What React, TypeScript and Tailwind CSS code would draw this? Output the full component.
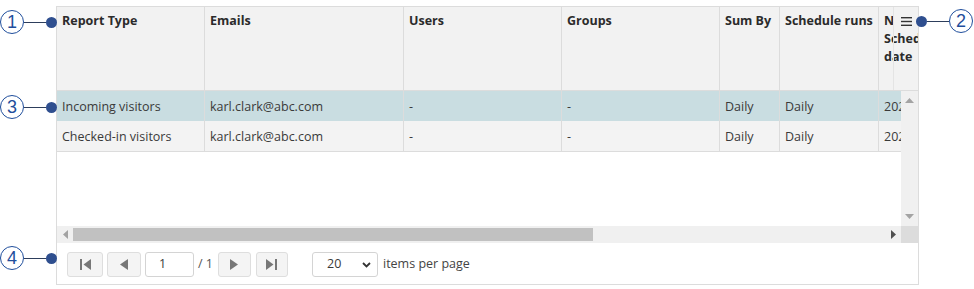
import React from 'react';

const cols = ['w-[148px]', 'w-[199px]', 'w-[158px]', 'w-[158px]', 'w-[60px]', 'w-[99px]', 'w-[60px]'];

const headers = ['Report Type', 'Emails', 'Users', 'Groups', 'Sum By', 'Schedule runs', 'Next Schedule date'];

const rows = [
    { cells: ['Incoming visitors', 'karl.clark@abc.com', '-', '-', 'Daily', 'Daily', '2024-01-01'], selected: true },
    { cells: ['Checked-in visitors', 'karl.clark@abc.com', '-', '-', 'Daily', 'Daily', '2024-01-01'], selected: false },
];

const Callout = ({ n, side }: { n: string; side: 'left' | 'right' }) => (
    <div className={`flex items-center ${side === 'right' ? 'flex-row-reverse' : ''}`}>
        <div className="w-[24px] h-[24px] rounded-full border-[1.5px] border-[#1f4e9c] flex items-center justify-center text-[18px] leading-none text-[#1f4e9c] font-['Liberation_Sans',sans-serif] bg-white">
            {n}
        </div>
        <div className="w-[22px] h-px bg-[#2d3e5c]" />
        <div className="w-[11px] h-[11px] rounded-full bg-[#2f4f8f]" />
    </div>
);

const PagerButton = ({ children, className = '' }: { children: React.ReactNode; className?: string }) => (
    <div className={`h-[25px] flex items-center justify-center rounded-[3px] border border-[#dedede] bg-[#f4f4f4] ${className}`}>
        {children}
    </div>
);

export default function App() {
    return (
        <div className="relative w-[974px] h-[289px] bg-white font-['Open_Sans',sans-serif] text-[12.5px] text-[#3a3a3a]">
            <div className="absolute left-0 top-[10px]"><Callout n="1" side="left" /></div>
            <div className="absolute left-0 top-[95px]"><Callout n="3" side="left" /></div>
            <div className="absolute left-0 top-[246px]"><Callout n="4" side="left" /></div>
            <div className="absolute right-[1px] top-[9px] z-10"><Callout n="2" side="right" /></div>

            <div className="pt-[6px] pl-[56px]">
                <div className="w-[863px] h-[279px] border border-[#dcdcdc] flex flex-col overflow-hidden">
                    {/* header */}
                    <div className="relative h-[84px] flex border-b border-[#dcdcdc] bg-[#f2f2f2] overflow-hidden shrink-0">
                        {headers.map((h, i) => (
                            <div key={h} className={`${cols[i]} shrink-0 border-r border-[#dcdcdc] pl-[5px] pr-[4px] pt-[5px] font-bold text-[#2b2b2b] leading-[18px]`}>
                                {h}
                            </div>
                        ))}
                        <div className="absolute right-0 top-0 h-full w-[25px] border-l border-[#e4e4e4]">
                            <div className="h-[26px] bg-[#f2f2f2] flex items-start justify-center pt-[10px]">
                                <svg width="11" height="9" viewBox="0 0 11 9">
                                    <rect x="0" y="0" width="11" height="1.4" fill="#333" />
                                    <rect x="0" y="3.8" width="11" height="1.4" fill="#333" />
                                    <rect x="0" y="7.6" width="11" height="1.4" fill="#333" />
                                </svg>
                            </div>
                        </div>
                    </div>

                    {/* body */}
                    <div className="flex h-[135px] shrink-0">
                        <div className="w-[844px] overflow-hidden bg-white">
                            {rows.map((r, ri) => (
                                <div key={ri} className={`flex ${r.selected ? 'h-[30px] bg-[#c9dde1]' : 'h-[31px] bg-[#f3f3f3] border-b border-[#dcdcdc]'}`}>
                                    {r.cells.map((c, i) => (
                                        <div key={i} className={`${cols[i]} shrink-0 border-r border-[#dcdcdc] pl-[5px] pt-[2px] flex items-center whitespace-nowrap overflow-hidden`}>
                                            {c}
                                        </div>
                                    ))}
                                </div>
                            ))}
                        </div>
                        <div className="w-[17px] bg-[#f0f0f0] flex flex-col items-center justify-between py-[7px]">
                            <svg width="9" height="5" viewBox="0 0 9 5"><path d="M4.5 0 L9 5 L0 5 Z" fill="#a3a3a3" /></svg>
                            <svg width="9" height="5" viewBox="0 0 9 5"><path d="M0 0 L9 0 L4.5 5 Z" fill="#a3a3a3" /></svg>
                        </div>
                    </div>

                    {/* horizontal scrollbar */}
                    <div className="flex h-[17px] shrink-0">
                        <div className="w-[844px] bg-[#f0f0f0] flex items-center">
                            <div className="w-[16px] flex justify-center">
                                <svg width="5" height="9" viewBox="0 0 5 9"><path d="M5 0 L5 9 L0 4.5 Z" fill="#a3a3a3" /></svg>
                            </div>
                            <div className="w-[520px] h-[13px] bg-[#c1c1c1]" />
                            <div className="flex-1" />
                            <div className="w-[16px] flex justify-center">
                                <svg width="5" height="9" viewBox="0 0 5 9"><path d="M0 0 L5 4.5 L0 9 Z" fill="#505050" /></svg>
                            </div>
                        </div>
                        <div className="w-[17px] bg-[#dcdcdc]" />
                    </div>

                    {/* pager */}
                    <div className="flex items-center h-[41px] pl-[10px] pt-[2px]">
                        <PagerButton className="w-[36px]">
                            <svg width="11" height="11" viewBox="0 0 11 11"><rect x="0" y="0" width="2" height="11" fill="#777" /><path d="M11 0 L11 11 L3.5 5.5 Z" fill="#777" /></svg>
                        </PagerButton>
                        <PagerButton className="w-[34px] ml-[4px]">
                            <svg width="8" height="11" viewBox="0 0 8 11"><path d="M8 0 L8 11 L0 5.5 Z" fill="#777" /></svg>
                        </PagerButton>
                        <div className="w-[49px] h-[25px] ml-[4px] rounded-[3px] border border-[#d4d4d4] bg-white flex items-center pl-[13px]">1</div>
                        <span className="ml-[4px] text-[#555]">/ 1</span>
                        <PagerButton className="w-[33px] ml-[5px]">
                            <svg width="8" height="11" viewBox="0 0 8 11"><path d="M0 0 L8 5.5 L0 11 Z" fill="#777" /></svg>
                        </PagerButton>
                        <PagerButton className="w-[32px] ml-[5px]">
                            <svg width="11" height="11" viewBox="0 0 11 11"><path d="M0 0 L7.5 5.5 L0 11 Z" fill="#777" /><rect x="9" y="0" width="2" height="11" fill="#777" /></svg>
                        </PagerButton>
                        <div className="w-[66px] h-[25px] ml-[24px] rounded-[3px] border border-[#d4d4d4] bg-white flex items-center justify-between pl-[14px] pr-[6px]">
                            <span>20</span>
                            <svg width="9" height="6" viewBox="0 0 9 6"><path d="M1 1 L4.5 4.5 L8 1" stroke="#333" strokeWidth="1.8" fill="none" /></svg>
                        </div>
                        <span className="ml-[5px] text-[#444]">items per page</span>
                    </div>
                </div>
            </div>
        </div>
    );
}
